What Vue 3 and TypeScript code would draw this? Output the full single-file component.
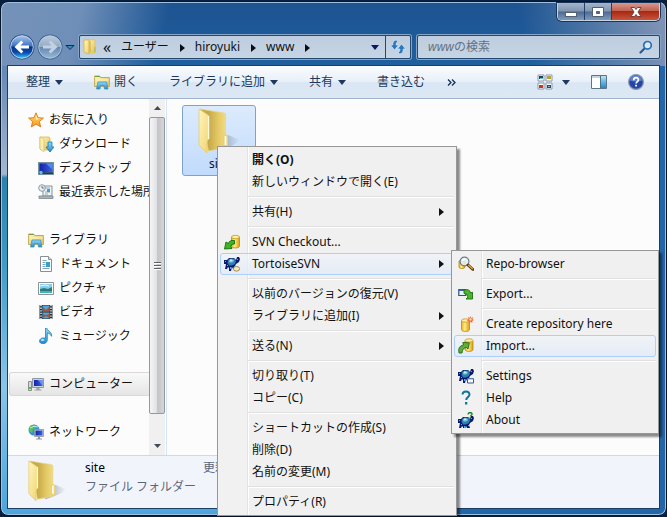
<script setup lang="ts">
import { ref } from 'vue'

interface NavItem {
  label: string
  icon: string
}
interface NavGroup {
  root: NavItem
  children: NavItem[]
  selected?: boolean
}
interface MenuEntry {
  label?: string
  icon?: string
  arrow?: boolean
  bold?: boolean
  active?: boolean
  separator?: boolean
  children?: MenuEntry[]
}

const search = ref('')
const crumbs = ['ユーザー', 'hiroyuki', 'www']

const groups: NavGroup[] = [
  {
    root: { label: 'お気に入り', icon: 'star' },
    children: [
      { label: 'ダウンロード', icon: 'download' },
      { label: 'デスクトップ', icon: 'desktop' },
      { label: '最近表示した場所', icon: 'recent' },
    ],
  },
  {
    root: { label: 'ライブラリ', icon: 'library' },
    children: [
      { label: 'ドキュメント', icon: 'document' },
      { label: 'ピクチャ', icon: 'picture' },
      { label: 'ビデオ', icon: 'video' },
      { label: 'ミュージック', icon: 'music' },
    ],
  },
  { root: { label: 'コンピューター', icon: 'computer' }, children: [], selected: true },
  { root: { label: 'ネットワーク', icon: 'network' }, children: [] },
]

const sep: MenuEntry = { separator: true }

const svnMenu: MenuEntry[] = [
  { label: 'Repo-browser', icon: 'repo' },
  sep,
  { label: 'Export...', icon: 'export' },
  sep,
  { label: 'Create repository here', icon: 'create' },
  { label: 'Import...', icon: 'import', active: true },
  sep,
  { label: 'Settings', icon: 'settings' },
  { label: 'Help', icon: 'question' },
  { label: 'About', icon: 'about' },
]

const menu: MenuEntry[] = [
  { label: '開く(O)', bold: true },
  { label: '新しいウィンドウで開く(E)' },
  sep,
  { label: '共有(H)', arrow: true },
  sep,
  { label: 'SVN Checkout...', icon: 'checkout' },
  { label: 'TortoiseSVN', icon: 'tortoise', arrow: true, active: true, children: svnMenu },
  sep,
  { label: '以前のバージョンの復元(V)' },
  { label: 'ライブラリに追加(I)', arrow: true },
  sep,
  { label: '送る(N)', arrow: true },
  sep,
  { label: '切り取り(T)' },
  { label: 'コピー(C)' },
  sep,
  { label: 'ショートカットの作成(S)' },
  { label: '削除(D)' },
  { label: '名前の変更(M)' },
  sep,
  { label: 'プロパティ(R)' },
]

const turtle = `
  <path d="M0 4h3l2-2h5l2 2 1-3h2l1 2-1 3-3 2-1 2 1 3h-3l-1-2-1 4H5l0-3-1-1-1 2H1l1-5H0z" fill="#0b1a6e"/>
  <path d="M4 4l2-1.500h4L12 5l-1 3-3 1.500H5L3.500 7z" fill="#2f7fae"/>
  <path d="M5 4.500l1.500-1H9L10 5 8 6.500H5.500z" fill="#7fcbe4"/>
  <path d="M6 3.500h2v1.500H6z" fill="#c9f0f8"/>
  <path d="M3 9h1v1H3zM6 11h1.500v2H6zM10 10h1v1h-1zM13 3h1v1h-1zM1 5h1v1H1z" fill="#5c9dff"/>`

const drum = (x: number, y: number) => `
  <path d="M${x} ${y + 2}v9c0 2.600 8 2.600 8 0v-9z" fill="url(#gold)" stroke="#b98910" stroke-width=".8"/>
  <ellipse cx="${x + 4}" cy="${y + 2}" rx="4" ry="1.700" fill="#fdf0a0" stroke="#c79a1c" stroke-width=".8"/>`

const icons: Record<string, string> = {
  star: `<path d="M8 .8l2.100 4.900 5.300.4-4 3.500 1.300 5.300L8 12.100l-4.700 2.800 1.300-5.300-4-3.500 5.300-.4z" fill="url(#star)" stroke="#d9761c" stroke-width=".9" stroke-linejoin="round"/><path d="M8 3.200l1.300 3.300 3.200.3-4.500 1z" fill="#fff7b5"/>`,
  download: `<path d="M2 1h9l1 1v12H3l-1-1z" fill="url(#folder)" stroke="#cdb04a" stroke-width=".7"/><path d="M2 1l4 2v13l-4-3z" fill="#fbeeb0" stroke="#d7bf63" stroke-width=".7"/><path d="M10 6h4v5h2l-4 5-4-5h2z" fill="url(#blue)" stroke="#1978b8" stroke-width=".8"/>`,
  desktop: `<rect x=".5" y="2.500" width="15" height="12" fill="#6c8296" stroke="#77909f"/><rect x="1.500" y="3.500" width="13" height="9" fill="url(#screen)"/><path d="M8 3.500h6.500v6z" fill="#5689e4"/><path d="M1 12.500h14V14H1z" fill="#26394d"/><circle cx="3" cy="12.500" r="1.700" fill="#5ec2e8"/>`,
  recent: `<path d="M5 2h9v10H5z" fill="#eef3f5" stroke="#83939c"/><path d="M7 4h5M7 8h5M7 10h3" stroke="#9aabb4"/><rect x="9" y="5" width="3" height="3" fill="#429ed1"/><circle cx="4" cy="4" r="3.300" fill="#e7eef2" stroke="#8e9ba4"/><path d="M4 2v2h2" fill="none" stroke="#52616b" stroke-width=".8"/><path d="M1 12h14v2.500H1z" fill="#a9b3b9" stroke="#7d898f" stroke-width=".8"/>`,
  library: `<path d="M.6 3.500V2h5l1 1.500h8.800v9H.6z" fill="url(#folder)" stroke="#bfa14a" stroke-width=".9"/><path d="M1 2.500h5" stroke="#6fa43c"/><path d="M1.500 6h13" stroke="#fff3b7"/><path d="M2.500 15l1.500-7h8.500L14 15h-3.500l-.5-3.500H6.500L6 15z" fill="url(#blue)" stroke="#3f93bd" stroke-width=".8"/>`,
  document: `<path d="M2.500.5h8l3 3v12h-11z" fill="#fff" stroke="#8a8f94"/><path d="M10.500.5v3h3" fill="#dde3e8" stroke="#8a8f94"/><path d="M4.500 4.500h4M4.500 6.500h3M4.500 8.500h3M4.500 10.500h3M4.500 12.500h7" stroke="#7fa6bb"/><rect x="8" y="6" width="4" height="5" fill="#35a0ce"/>`,
  picture: `<path d="M.5 2.500h15v12H.5z" fill="#fff" stroke="#8d9296"/><path d="M2 4h12v9H2z" fill="#86cdec"/><path d="M2 9l4-1 4 1 4-2v6H2z" fill="#2b7b73"/><path d="M2 11h12v2H2z" fill="#46b0bb"/><path d="M2 6l5-1 4 1" stroke="#ecfaff" fill="none"/>`,
  video: `<path d="M1.500 1h13v14h-13z" fill="#29323c"/><path d="M4.500 1.500h7v6h-7z" fill="#4ea7d8"/><path d="M4.500 8.500h7v6h-7z" fill="#4ea7d8"/><path d="M5 3l3 3 3-3v4H5zM5 10l3 1 3-1v4l-3-2-3 2z" fill="#a4563a"/><path d="M3 1v14M13 1v14" stroke="#f3f5f7" stroke-width="1.400" stroke-dasharray="1.300 1.300"/>`,
  music: `<path d="M7.500 0h1.200c.6 3 5.600 3.600 4.900 8.300-.8-2-2.400-2.800-4.300-3.200v6.600c0 5.200-7.800 4.900-7.800 1.500 0-2.800 3.500-4 6-2.900z" fill="url(#blue)" stroke="#2284bd" stroke-width=".8"/><ellipse cx="4.600" cy="12" rx="1.700" ry="1" fill="#b8e6fb"/>`,
  computer: `<path d="M.5 5.500h3v9h-3z" fill="#d2d8dc" stroke="#86908f"/><path d="M1 11h2v2H1z" fill="#55b847"/><path d="M4.500 2.500h11v9h-11z" fill="#ccd3da" stroke="#8d98a3"/><path d="M6 4h8.500v6H6z" fill="url(#screen)"/><path d="M10 4h4v5z" fill="#6d8df5"/><path d="M8.500 12h3v1.500h2v1h-7v-1h2z" fill="#98a2a8"/>`,
  network: `<circle cx="6" cy="6" r="5.500" fill="#2f95cd"/><path d="M2 2c2 0 3-2 5-1l1 3-3 1-1 4-3-2zM7 8l3-1v4H7z" fill="#5ac250"/><path d="M2 4q4-3 8-1" stroke="#bfe9fa" fill="none"/><path d="M6.500 5.500h9v7h-9z" fill="#ccd5df" stroke="#8793a0" stroke-width=".8"/><path d="M7.500 6.500h7v5h-7z" fill="url(#screen)"/><path d="M10 13h2v1.500h2v1H8v-1h2z" fill="#8b96a2"/>`,
  checkout: drum(7.5, 1) + `<path d="M10.500 6.500Q5 6 4.500 9.500L2 8l-1.500 7L8 14.500 6.800 12.500Q7 9.500 10.500 10z" fill="#3cb61e" stroke="#146e0c" stroke-width=".9"/>`,
  tortoise: turtle + `<ellipse cx="12.500" cy="12.800" rx="3.200" ry="2.300" fill="#f6e9b8" stroke="#8c7a42" stroke-width=".8"/>`,
  repo: `<path d="M1 5v6c0 2 6 2 6 0V5z" fill="url(#gold)" stroke="#b98910" stroke-width=".8"/><circle cx="6.500" cy="5.500" r="4.400" fill="#e3f1fa" fill-opacity=".85" stroke="#6f7a83" stroke-width="1.200"/><path d="M4 5q1-2 3-2" stroke="#fff" stroke-width="1.300" fill="none"/><path d="M10 9l5 4.500" stroke="#5e3f12" stroke-width="3" stroke-linecap="round"/><path d="M10.300 9l4.500 4" stroke="#dda43c" stroke-width="1.300"/>`,
  export: `<path d="M.8 3.500h7v6h-7z" fill="#eaf6ff" stroke="#2d4e86" stroke-width="1.200"/><path d="M.8 3.500h7v1.500h-7z" fill="#3568a8"/><path d="M6 4q6-1.500 6.500 3l2-.8V13H8l2-2Q9.500 7.500 6 7.500z" fill="#4cb52c" stroke="#1c6e12" stroke-width=".9"/>`,
  create: drum(3.5, 2.5) + `<path d="M12.500 0l.7 1.900L15.300 1l-.8 2.100 1.500 1-1.800.8.200 2.100-1.900-1-1.600 1.200-.2-2-1.900-.8L10.500 3 10 1l1.800.8z" fill="#f4743c"/><circle cx="12.500" cy="3.400" r="1.100" fill="#ffe9bd"/>`,
  import: drum(7, 0.5) + `<path d="M1 15Q-.500 8 5.500 7L4.800 4.500l6.500.3L10 11 8.500 9.500Q4.500 9.500 4 15z" fill="#5cb136" stroke="#24691b" stroke-width=".9"/>`,
  settings: turtle + `<path d="M9.500 10.500h6v4.500h-6z" fill="#f6faff" stroke="#3c588c"/><path d="M9.500 11h6" stroke="#7fa3d3"/>`,
  question: `<path d="M4.500 4.500q.3-3 3.500-3t3.500 3c0 2.300-3.200 2.600-3.300 5.500" fill="none" stroke="#0b7899" stroke-width="2"/><path d="M7 12h2.300v2.500H7z" fill="#0b7899"/>`,
  about: `<g transform="translate(0 3)">${turtle}</g><path d="M10 2.500q.2-2 2.200-2 1.900.1 1.900 1.600c0 1.300-1.700 1.300-1.800 2.300M12.300 5.200v1.200" fill="none" stroke="#167f22" stroke-width="1.300"/>`,
}
</script>

<template>
  <svg class="defs" aria-hidden="true">
    <defs>
      <linearGradient id="folder" x1="0" x2="1" y2="1"><stop stop-color="#fff6c4" /><stop offset="1" stop-color="#e2c256" /></linearGradient>
      <linearGradient id="inner" x1="0" x2="1"><stop stop-color="#c9ab48" /><stop offset=".3" stop-color="#c5a848" /><stop offset=".65" stop-color="#e3c864" /><stop offset="1" stop-color="#f3e08c" /></linearGradient>
      <linearGradient id="front" x1="0" x2="1" y2="1"><stop stop-color="#fff5bd" /><stop offset="1" stop-color="#f0d470" /></linearGradient>
      <linearGradient id="shade" x1="0" x2="1"><stop stop-color="#54606f" stop-opacity=".55" /><stop offset="1" stop-color="#54606f" stop-opacity="0" /></linearGradient>
      <linearGradient id="star" x2="0" y2="1"><stop stop-color="#ffe36a" /><stop offset="1" stop-color="#fb9420" /></linearGradient>
      <linearGradient id="blue" x2="0" y2="1"><stop stop-color="#8ed8f8" /><stop offset="1" stop-color="#2388c8" /></linearGradient>
      <linearGradient id="screen" x1="0" x2="1"><stop stop-color="#1322a8" /><stop offset="1" stop-color="#3a63de" /></linearGradient>
      <linearGradient id="gold" x1="0" x2="1"><stop stop-color="#e9ab2c" /><stop offset=".4" stop-color="#ffeb7e" /><stop offset="1" stop-color="#dd9d1a" /></linearGradient>
      <linearGradient id="orb" x2="0" y2="1"><stop stop-color="#a9c6ec" /><stop offset=".45" stop-color="#3c74c2" /><stop offset=".5" stop-color="#06338c" /><stop offset=".75" stop-color="#0a4bb0" /><stop offset="1" stop-color="#38c8fa" /></linearGradient>
      <linearGradient id="orboff" x2="0" y2="1"><stop stop-color="#bccbdc" /><stop offset=".48" stop-color="#93acc8" /><stop offset=".52" stop-color="#6488b3" /><stop offset="1" stop-color="#98b8d6" /></linearGradient>
      <symbol id="bigfolder" viewBox="0 0 44 46">
        <path d="M20 42L31 27l12 5q-5 6-23 11z" fill="url(#shade)" />
        <path d="M3 1l24 4q1.500.3 1.500 2v21l2 1v9l-3 2-16 3z" fill="url(#inner)" stroke="#e6d48a" stroke-width=".8" />
        <path d="M2 1l9 6q1 1 1 2v22q-2 1-2 4v10L3 38q-1-1-1-2z" fill="url(#front)" stroke="#e4cb73" stroke-width=".8" />
        <path d="M11.500 8v23" stroke="#fffbe0" stroke-width="1.200" />
        <path d="M25.500 27q4.500-2 5 1v10l-4 2z" fill="#ecd06a" />
        <path d="M28.500 28v9" stroke="#fff" stroke-width="1.800" />
      </symbol>
    </defs>
  </svg>

  <main class="window">
    <header class="titlebar">
      <div class="caption">
        <button type="button" aria-label="最小化"><svg width="14" height="14" viewBox="0 0 14 14"><rect x="1.500" y="7.500" width="11" height="4" fill="#fff" stroke="#53606e" /></svg></button>
        <button type="button" aria-label="最大化"><svg width="14" height="14" viewBox="0 0 14 14"><path d="M1.500 2.500h11v9h-11zM5.500 6.500v2h3v-2z" fill="#fff" fill-rule="evenodd" stroke="#53606e" /></svg></button>
        <button type="button" class="close" aria-label="閉じる"><svg width="14" height="14" viewBox="0 0 14 14"><path d="M2 2.500h3.500L7 4.500l1.500-2H12L9 7l3 4.500H8.500L7 9.500l-1.500 2H2L5 7z" fill="#fff" stroke="#6c4546" /></svg></button>
      </div>
    </header>

    <div class="location">
      <div class="history">
        <button type="button" aria-label="戻る">
          <svg width="26" height="26" viewBox="0 0 26 26"><circle cx="13" cy="13" r="12.500" fill="#244d82" /><circle cx="13" cy="13" r="11.300" fill="url(#orb)" stroke="#c9dcf0" stroke-width=".9" /><path d="M5.500 13l6.800-6.500 2 2-2.800 3H20v3h-8.500l2.800 3-2 2z" fill="#fff" /></svg>
        </button>
        <button type="button" aria-label="進む">
          <svg width="26" height="26" viewBox="0 0 26 26"><circle cx="13" cy="13" r="12.500" fill="#35618f" /><circle cx="13" cy="13" r="11.300" fill="url(#orboff)" stroke="#b9cbdd" stroke-width=".9" /><path d="M20.500 13l-6.800-6.500-2 2 2.800 3H6v3h8.500l-2.800 3 2 2z" fill="#c3d2e2" /></svg>
        </button>
        <button type="button" class="recent" aria-label="最近のページ"><svg width="10" height="7" viewBox="0 0 10 7"><path d="M1 1.500h8L5 5.500z" fill="#3c8ac0" stroke="#0c2d56" /></svg></button>
      </div>
      <nav class="address" aria-label="アドレス">
        <svg width="16" height="18" viewBox="0 0 16 18"><path d="M5 2h8v13H6z" fill="url(#folder)" stroke="#d9bf60" stroke-width=".6" /><path d="M2 2h5v14l-5-2z" fill="url(#front)" stroke="#cfae42" stroke-width=".7" /><path d="M8 3v11" stroke="#c9a737" /><path d="M13 9v5" stroke="#9ebc55" /></svg>
        <span class="back-chevrons">«</span>
        <template v-for="c in crumbs" :key="c">
          <button type="button" class="crumb">{{ c }}</button>
          <svg class="crumb-arrow" width="5" height="8" viewBox="0 0 5 8"><path d="M0 0l5 4-5 4z" fill="#0c0c14" /></svg>
        </template>
        <button type="button" class="drop" aria-label="履歴"><svg width="8" height="5" viewBox="0 0 8 5"><path d="M0 0h8L4 5z" fill="#0b1765" /></svg></button>
        <button type="button" class="refresh" aria-label="更新">
          <svg width="16" height="16" viewBox="0 0 16 16"><path d="M6.500 1Q2.500 1.500 2.800 6H.5l4 5 4-5H6Q6 3.500 7.500 2.500zM9.500 15q4-.5 3.700-5h2.300l-4-5-4 5H10q0 2.500-1.500 3.500z" fill="#2b77c0" stroke="#e3eef8" stroke-width=".6" /></svg>
        </button>
      </nav>
      <label class="search">
        <input v-model="search" type="text" placeholder="wwwの検索" aria-label="wwwの検索" />
        <svg width="14" height="14" viewBox="0 0 14 14"><path d="M6 8l-4.500 4.500" stroke="#2a5895" stroke-width="2.200" stroke-linecap="round" /><circle cx="8.500" cy="5.300" r="3.800" fill="#d9e9f6" stroke="#2d6db4" stroke-width="1.700" /></svg>
      </label>
    </div>

    <section class="client">
      <div class="toolbar">
        <button type="button">整理<i class="tri"></i></button>
        <button type="button" class="open"><svg width="16" height="16" viewBox="0 0 16 16" v-html="icons.library"></svg>開く</button>
        <button type="button">ライブラリに追加<i class="tri"></i></button>
        <button type="button">共有<i class="tri"></i></button>
        <button type="button">書き込む</button>
        <button type="button" class="more" aria-label="その他"><svg width="9" height="7" viewBox="0 0 9 7"><path d="M1 .5l3 3-3 3M5 .5l3 3-3 3" fill="none" stroke="#16304f" stroke-width="1.300" /></svg></button>
        <div class="tools">
          <button type="button" aria-label="表示"><svg width="16" height="16" viewBox="0 0 16 16"><path d="M1 1h6v6H1zM9 1h6v6H9zM1 9h6v6H1zM9 9h6v6H9z" fill="#fff" stroke="#8a96a6" /><path d="M2 2h4v3H2z" fill="#2c3f53" /><path d="M10 2h4v3h-4z" fill="#b1a633" /><path d="M2 11h4v3H2z" fill="#c13a20" /><path d="M10 11h4v3h-4z" fill="#3b474f" /><path d="M3 4h3v1H3zM11 12h2v1h-2z" fill="#62c0d8" /></svg><i class="tri"></i></button>
          <button type="button" aria-label="プレビュー"><svg width="16" height="14" viewBox="0 0 16 14"><path d="M.5.5h15v13H.5z" fill="#fff" stroke="#5e7589" /><path d="M1 1h14v2H1z" fill="#c5d3df" /><path d="M10 3h5v10h-5z" fill="url(#blue)" /><path d="M9.500 1v12" stroke="#4f6f86" /></svg></button>
          <button type="button" aria-label="ヘルプ"><svg width="16" height="16" viewBox="0 0 16 16"><circle cx="8" cy="8" r="7.400" fill="#2447a6" stroke="#9099a8" stroke-width="1.200" /><path d="M2 6.500a6.100 6.100 0 0 1 12 0q-6 2-12 0z" fill="#7193dd" opacity=".8" /><path d="M5.700 6.300q0-2.600 2.400-2.600t2.300 2.200c0 1.700-2.200 1.600-2.300 3.600" fill="none" stroke="#fff" stroke-width="1.700" /><path d="M7.200 10.700H9v1.700H7.200z" fill="#fff" /></svg></button>
        </div>
      </div>

      <div class="body">
        <nav class="sidebar" aria-label="ナビゲーション">
          <ul v-for="g in groups" :key="g.root.label">
            <li>
              <a href="#" class="node" :class="{ selected: g.selected }"><svg width="16" height="16" viewBox="0 0 16 16" v-html="icons[g.root.icon]"></svg>{{ g.root.label }}</a>
            </li>
            <li v-for="c in g.children" :key="c.label">
              <a href="#" class="node child"><svg width="16" height="16" viewBox="0 0 16 16" v-html="icons[c.icon]"></svg>{{ c.label }}</a>
            </li>
          </ul>
        </nav>
        <div class="scrollbar">
          <button type="button" aria-label="上へ"><svg width="7" height="4" viewBox="0 0 7 4"><path d="M0 4l3.500-4L7 4z" fill="#444b52" /></svg></button>
          <div class="thumb"><i></i></div>
          <button type="button" aria-label="下へ"><svg width="7" height="4" viewBox="0 0 7 4"><path d="M0 0l3.500 4L7 0z" fill="#444b52" /></svg></button>
        </div>
        <div class="files">
          <button type="button" class="file"><svg width="44" height="46"><use href="#bigfolder" /></svg><span>site</span></button>
        </div>
      </div>

      <footer class="details">
        <svg width="40" height="42"><use href="#bigfolder" /></svg>
        <div class="about">
          <span class="name">site</span>
          <span>ファイル フォルダー</span>
        </div>
        <span>更新日時</span>
      </footer>
    </section>
  </main>

  <ul class="menu context" role="menu">
    <li v-for="(m, i) in menu" :key="i" :class="m.separator ? 'sep' : 'item'">
      <button v-if="!m.separator" type="button" role="menuitem" :class="{ active: m.active, bold: m.bold }">
        <svg width="16" height="16" viewBox="0 0 16 16" v-html="m.icon ? icons[m.icon] : ''"></svg>
        <span>{{ m.label }}</span>
        <i v-if="m.arrow" class="sub-arrow"></i>
      </button>
      <ul v-if="m.children" class="menu submenu" role="menu">
        <li v-for="(s, j) in m.children" :key="j" :class="s.separator ? 'sep' : 'item'">
          <button v-if="!s.separator" type="button" role="menuitem" :class="{ active: s.active }">
            <svg width="16" height="16" viewBox="0 0 16 16" v-html="s.icon ? icons[s.icon] : ''"></svg>
            <span>{{ s.label }}</span>
          </button>
        </li>
      </ul>
    </li>
  </ul>
</template>

<style>
body {
  background: #08203f;
  overflow: hidden;
}
#app {
  padding: 1px 0;
  font: 12px/16px "Noto Sans", "Noto Sans CJK JP", sans-serif;
  color: #111;
}
#app *,
#app *::before {
  box-sizing: border-box;
}
</style>

<style scoped>
.defs {
  position: absolute;
  width: 0;
  height: 0;
}
button {
  border: 0;
  padding: 0;
  background: none;
  font: inherit;
  color: inherit;
  white-space: nowrap;
}
ul {
  list-style: none;
  margin: 0;
  padding: 0;
}
svg {
  flex: none;
  display: block;
}
.window {
  display: flex;
  flex-direction: column;
  height: calc(100vh - 2px);
  padding: 1px 6px 6px;
  border: 1px solid #06172c;
  border-radius: 8px;
  box-shadow: inset 0 0 0 1px #9fc0de;
  background:
    linear-gradient(105deg, #7592b9 0, #6f8fb8 80px, transparent 165px) top / 100% 64px no-repeat,
    linear-gradient(75deg, transparent 78%, #7d92b4 98%) top / 100% 64px no-repeat,
    linear-gradient(#1d5390, #20609f) top / 100% 64px no-repeat,
    linear-gradient(90deg, transparent 50%, #2366a7 50%),
    linear-gradient(#6387b5 64px, #a3b8d0 172px, #2b82ae 176px, #3c9ac4 50%, #8ac5e8 75%, #4ca5dc);
}
.titlebar {
  display: flex;
  justify-content: flex-end;
  height: 31px;
  flex: none;
}
.caption {
  display: flex;
  height: 18px;
  border: 1px solid #c5d3e2;
  border-top: 0;
  border-radius: 0 0 5px 5px;
  overflow: hidden;
  box-shadow: 0 0 0 1px #18365c;
}
.caption button {
  display: grid;
  place-items: center;
  width: 27px;
  background: linear-gradient(#a5b5ca, #8095b2 48%, #4c6a92 52%, #7f9abc);
  border-right: 1px solid #22426b;
}
.caption .close {
  width: 47px;
  border: 0;
  background: linear-gradient(#d79a90, #c4624f 45%, #a82812 50%, #c8553a);
}
.location {
  display: grid;
  grid-template-columns: 66px minmax(0, 332fr) minmax(0, 243fr);
  align-items: center;
  column-gap: 6px;
  height: 26px;
  margin-bottom: 5px;
  flex: none;
}
.history {
  display: flex;
  align-items: center;
  gap: 2px;
  padding-left: 2px;
}
.address,
.search {
  display: flex;
  align-items: center;
  height: 24px;
  border: 1px solid #24486f;
  border-radius: 2px;
  background: linear-gradient(#bdcddf, #c6d5e4);
  box-shadow: 0 0 0 1px #86a5c7;
}
.address {
  padding-left: 2px;
}
.back-chevrons {
  width: 18px;
  margin-left: 5px;
  font-size: 16px;
}
.crumb-arrow {
  margin: 2px 10px 0 11px;
}
.drop {
  display: grid;
  margin: 0 6px 0 auto;
}
.refresh {
  display: grid;
  place-items: center;
  width: 25px;
  height: 100%;
  border-left: 1px solid #24486f;
}
.search {
  padding: 0 6px 0 10px;
}
.search input {
  flex: 1;
  min-width: 0;
  border: 0;
  padding: 0;
  background: none;
  font: inherit;
  outline: none;
}
.search input::placeholder {
  color: #66717e;
  font-style: italic;
  font-synthesis: none;
  opacity: 1;
}
.client {
  display: flex;
  flex-direction: column;
  flex: 1;
  min-height: 0;
  border: 1px solid #1b3d66;
  background: #fcfcfc;
}
.toolbar {
  display: flex;
  align-items: center;
  gap: 31px;
  height: 33px;
  flex: none;
  padding: 0 15px 0 18px;
  border-bottom: 1px solid #9fb3cc;
  background: linear-gradient(#fafcfe, #e8f0fa 48%, #dbe6f4 52%, #dde8f5);
  color: #1e395b;
}
.toolbar button {
  display: flex;
  align-items: center;
  gap: 5px;
}
.toolbar .open {
  gap: 4px;
}
.toolbar .more {
  margin-left: -9px;
}
.tri {
  border: 4px solid transparent;
  border-top: 5px solid #1e395b;
  border-bottom: 0;
}
.tools {
  display: flex;
  align-items: center;
  gap: 21px;
  margin-left: auto;
}
.tools button {
  gap: 9px;
}
.body {
  display: flex;
  flex: 1;
  min-height: 0;
}
.sidebar {
  display: flex;
  flex-direction: column;
  gap: 24px;
  width: 141px;
  padding: 9px 0 0 1px;
  overflow: hidden;
  flex: none;
}
.node {
  display: flex;
  align-items: center;
  gap: 5px;
  height: 24px;
  padding-left: 19px;
  color: inherit;
  text-decoration: none;
  white-space: nowrap;
}
.child {
  padding-left: 29px;
}
.selected {
  padding-left: 18px;
  border: 1px solid #d9d9d9;
  border-right: 0;
  border-radius: 3px 0 0 3px;
  background: linear-gradient(#f9f9f9, #e5e5e5);
}
.scrollbar {
  display: flex;
  flex-direction: column;
  width: 16px;
  flex: none;
  background: #f0f0f0;
}
.scrollbar button {
  display: grid;
  place-items: center;
  height: 18px;
}
.thumb {
  display: grid;
  place-items: center;
  flex: 0 1 297px;
  border: 1px solid #95989c;
  border-radius: 2px;
  background: linear-gradient(90deg, #f5f5f5, #e3e4e6 45%, #c3c4c9 55%, #d6d7da);
}
.thumb i {
  width: 7px;
  height: 8px;
  background: repeating-linear-gradient(#5d6166 0 1px, #fff 1px 2px, transparent 2px 3px);
}
.scrollbar button:last-child {
  margin-top: auto;
}
.files {
  flex: 1;
  margin-left: 1px;
  padding: 6px 15px;
  border-left: 1px solid #d6e5f5;
}
.file {
  display: flex;
  flex-direction: column;
  align-items: center;
  gap: 2px;
  width: 74px;
  height: 71px;
  padding-top: 2px;
  border: 1px solid #7da2ce;
  border-radius: 3px;
  background: linear-gradient(#dcebfc, #c1dbfc);
}
.details {
  display: flex;
  height: 53px;
  flex: none;
  padding: 4px 0 0 19px;
  border-top: 1px solid #ccd9ea;
  background: #f1f5fb;
  color: #5a6779;
  white-space: nowrap;
}
.about {
  display: flex;
  flex-direction: column;
  gap: 3px;
  width: 118px;
  margin-left: 18px;
}
.name {
  color: #000;
}
.menu {
  position: absolute;
  padding: 2px;
  border: 1px solid #979797;
  background: linear-gradient(90deg, #f1f1f1 29px, #e2e3e3 29px 30px, #fff 30px 31px, #f0f0f0 31px);
  box-shadow: 3px 3px 2px rgba(0, 0, 0, 0.45);
}
.context {
  left: 217px;
  top: 146px;
  width: 240px;
}
.submenu {
  left: 231px;
  top: -3px;
  width: 208px;
}
.item {
  position: relative;
}
.item > button {
  display: flex;
  align-items: center;
  width: 100%;
  height: 22px;
  padding: 0 9px 0 3px;
  border: 1px solid transparent;
  border-radius: 3px;
  text-align: left;
}
.item > button span {
  flex: 1;
  margin-left: 12px;
}
.item > .active {
  border-color: #aecff7;
  background: linear-gradient(rgba(241, 245, 250, 0.6), rgba(225, 235, 248, 0.8));
}
.item > .bold {
  font-weight: 700;
}
.sub-arrow {
  border: 4px solid transparent;
  border-left: 5px solid #111;
  border-right: 0;
}
.sep {
  height: 8px;
  padding: 3px 0 0 28px;
}
.sep::before {
  content: "";
  display: block;
  height: 2px;
  background: linear-gradient(#e0e0e0 50%, #fff 50%);
}
</style>
